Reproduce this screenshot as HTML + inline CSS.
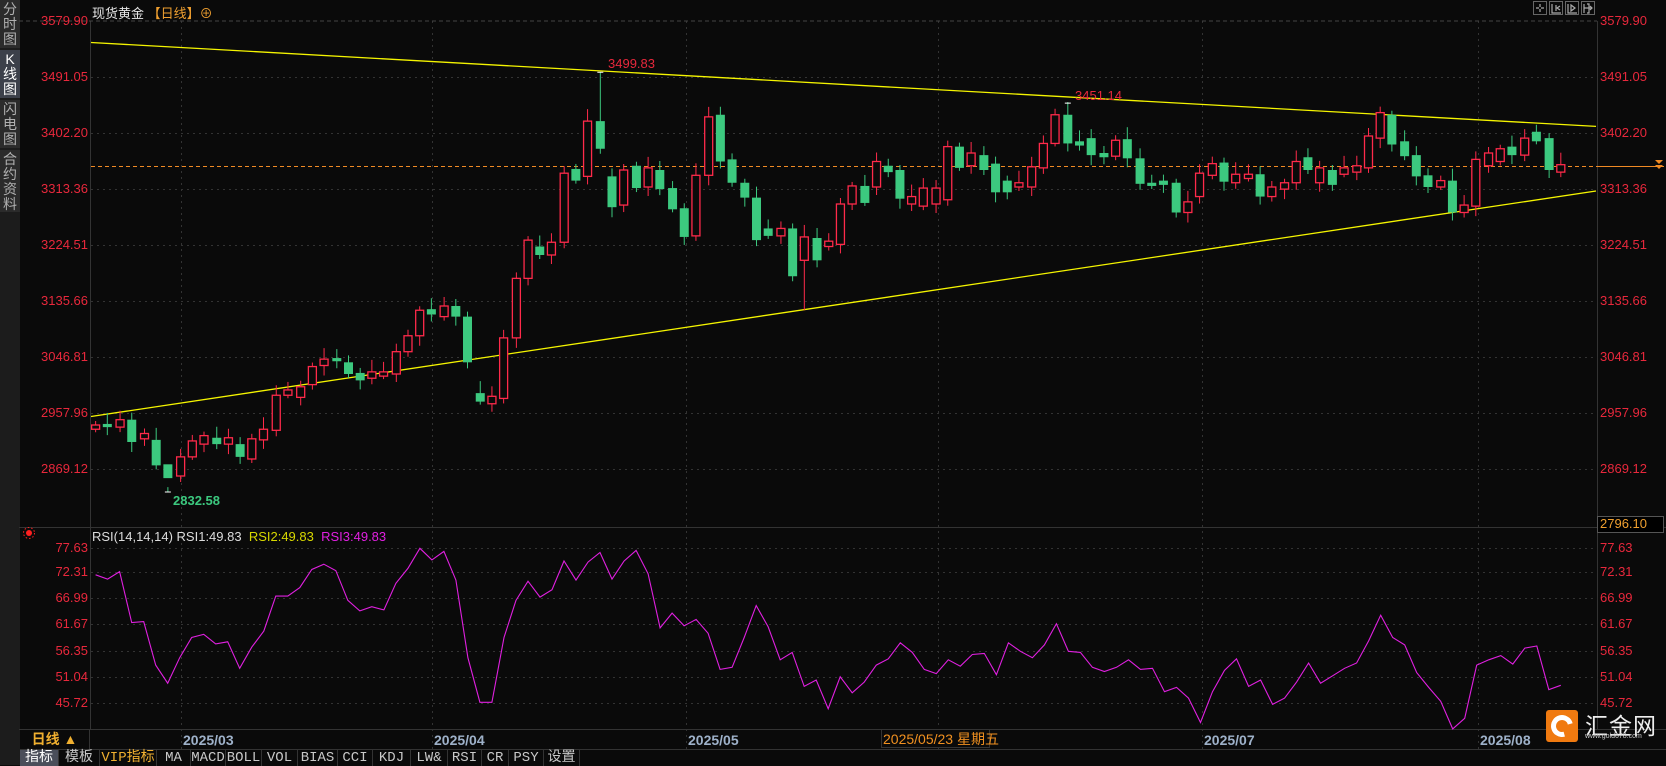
<!DOCTYPE html>
<html><head><meta charset="utf-8">
<style>
*{margin:0;padding:0;box-sizing:border-box}
body{width:1666px;height:765px;background:#0a0a0a;overflow:hidden;position:relative;font-family:"Liberation Sans","Noto Sans CJK SC",sans-serif}
.side{position:absolute;left:0;top:0;width:20px;height:765px;background:#1c1c1c}
.side div{position:absolute;left:0;width:20px;background:#2b2b2b;color:#b0b0b0;font-size:14px;line-height:15px;text-align:center;padding-top:2px}
.side div.act{background:#3c404a;color:#fff}
.lab{position:absolute;font-size:13px;color:#e8283c;line-height:14px}
.l{right:1578px}
.r{left:1600px}
.date{position:absolute;top:732px;font-size:14px;color:#9eb1c9;font-weight:bold}
.tabs{position:absolute;left:20px;top:749px;height:16px;width:1646px;border-top:1px solid #333;background:#0a0a0a}
.tab{position:absolute;top:0;height:16px;font-family:"Liberation Mono","Noto Sans CJK SC",monospace;font-size:14px;line-height:16px;color:#c8c8c8;text-align:center;border-right:1px solid #333}
</style></head><body>
<div class="side">
<div style="top:0;height:48px">分<br>时<br>图</div>
<div class="act" style="top:50px;height:48px">K<br>线<br>图</div>
<div style="top:100px;height:48px">闪<br>电<br>图</div>
<div style="top:150px;height:62px">合<br>约<br>资<br>料</div>
</div>
<div style="position:absolute;left:92px;top:3px;font-size:13px;color:#e6e6e6">现货黄金 <span style="color:#f0a030">【日线】</span><span style="color:#f0a030">⊕</span></div>

<svg style="position:absolute;left:0;top:0" width="1666" height="765">
<g stroke="#666" stroke-width="1" fill="none">
<rect x="1533.5" y="1.5" width="13" height="13"/><rect x="1549.5" y="1.5" width="13" height="13"/><rect x="1565.5" y="1.5" width="13" height="13"/><rect x="1581.5" y="1.5" width="13" height="13"/>
</g>
<g stroke="#aaa" stroke-width="1.2" fill="none">
<path d="M1540 4v3M1540 9v3M1536 8h3M1541 8h3M1552 4v9h9M1556 5v6M1560 6l-3 2 3 2M1568 4v9h9M1571 5v6l4-3z M1584 4v9M1584 8h8M1590 6l2 2-2 2M1587 4h2v9h-2"/>
</g>
<g id="grid" stroke="#333" stroke-dasharray="2,4" stroke-width="1"></g>
<line x1="90.5" y1="21" x2="90.5" y2="729" stroke="#333"/>
<line x1="1597.5" y1="21" x2="1597.5" y2="729" stroke="#333"/>
<line x1="19" y1="527.5" x2="1666" y2="527.5" stroke="#333"/>
<line x1="19" y1="729.5" x2="1666" y2="729.5" stroke="#333"/>
<line x1="19" y1="21" x2="1597" y2="21" stroke="#444" stroke-dasharray="4,3"/>
<line x1="91" y1="166.5" x2="1597" y2="166.5" stroke="#f08a24" stroke-dasharray="4,3"/>
<line x1="1597" y1="166.5" x2="1664" y2="166.5" stroke="#f08a24"/>
<path d="M1655 160h8l-4 4zM1655 165h8l-4 4z" fill="#f08a24"/>
<line x1="91" y1="42.5" x2="1596" y2="126.4" stroke="#f5f500" stroke-width="1.3"/>
<line x1="91" y1="416.5" x2="1596" y2="191" stroke="#f5f500" stroke-width="1.3"/>
<g id="candles"></g>
<polyline id="rsi" fill="none" stroke="#e020e0" stroke-width="1.1"/>
<circle cx="29" cy="533" r="3" fill="#ff2020"/>
<circle cx="29" cy="533" r="5.5" fill="none" stroke="#ff2020" stroke-dasharray="1.5,2"/>
<rect x="1597.5" y="516.5" width="66" height="16" fill="#000" stroke="#555"/>
</svg>

<div class="lab" style="left:608px;top:57px">3499.83</div>
<div class="lab" style="left:1075px;top:89px">3451.14</div>
<div class="lab" style="left:173px;top:494px;color:#3cc97f;font-weight:bold">2832.58</div>

<div class="lab l" style="top:14px">3579.90</div><div class="lab r" style="top:14px">3579.90</div>
<div class="lab l" style="top:70px">3491.05</div><div class="lab r" style="top:70px">3491.05</div>
<div class="lab l" style="top:126px">3402.20</div><div class="lab r" style="top:126px">3402.20</div>
<div class="lab l" style="top:182px">3313.36</div><div class="lab r" style="top:182px">3313.36</div>
<div class="lab l" style="top:238px">3224.51</div><div class="lab r" style="top:238px">3224.51</div>
<div class="lab l" style="top:294px">3135.66</div><div class="lab r" style="top:294px">3135.66</div>
<div class="lab l" style="top:350px">3046.81</div><div class="lab r" style="top:350px">3046.81</div>
<div class="lab l" style="top:406px">2957.96</div><div class="lab r" style="top:406px">2957.96</div>
<div class="lab l" style="top:462px">2869.12</div><div class="lab r" style="top:462px">2869.12</div>
<div class="lab r" style="top:517px;color:#f0a030">2796.10</div>

<div class="lab l" style="top:541px">77.63</div><div class="lab r" style="top:541px">77.63</div>
<div class="lab l" style="top:565px">72.31</div><div class="lab r" style="top:565px">72.31</div>
<div class="lab l" style="top:591px">66.99</div><div class="lab r" style="top:591px">66.99</div>
<div class="lab l" style="top:617px">61.67</div><div class="lab r" style="top:617px">61.67</div>
<div class="lab l" style="top:644px">56.35</div><div class="lab r" style="top:644px">56.35</div>
<div class="lab l" style="top:670px">51.04</div><div class="lab r" style="top:670px">51.04</div>
<div class="lab l" style="top:696px">45.72</div><div class="lab r" style="top:696px">45.72</div>

<div style="position:absolute;left:92px;top:529px;font-size:13px;color:#ddd;white-space:nowrap">RSI(14,14,14) RSI1:49.83 &nbsp;<span style="color:#d8d800">RSI2:49.83</span> &nbsp;<span style="color:#e020e0">RSI3:49.83</span></div>

<div style="position:absolute;left:20px;top:729px;width:70px;height:20px;border-right:1px solid #333;color:#f0b030;font-size:14px;font-weight:bold;text-align:center;line-height:20px">日线 ▲</div>
<div class="date" style="left:183px">2025/03</div>
<div class="date" style="left:434px">2025/04</div>
<div class="date" style="left:688px">2025/05</div>
<div class="date" style="left:1204px">2025/07</div>
<div class="date" style="left:1480px">2025/08</div>
<div style="position:absolute;left:881px;top:729px;width:109px;height:19px;border:1px solid #333;background:#0a0a0a;color:#f09020;font-size:14px;line-height:18px;padding-left:1px;white-space:nowrap">2025/05/23 星期五</div>

<div class="tabs">
<div class="tab" style="left:0;width:39px;background:#4a4e5a;color:#fff">指标</div>
<div class="tab" style="left:39px;width:41px">模板</div>
<div class="tab" style="left:80px;width:57px;color:#f0b030">VIP指标</div>
<div class="tab" style="left:137px;width:34px">MA</div>
<div class="tab" style="left:171px;width:35px">MACD</div>
<div class="tab" style="left:206px;width:36px">BOLL</div>
<div class="tab" style="left:242px;width:36px">VOL</div>
<div class="tab" style="left:278px;width:40px">BIAS</div>
<div class="tab" style="left:318px;width:35px">CCI</div>
<div class="tab" style="left:353px;width:38px">KDJ</div>
<div class="tab" style="left:391px;width:37px">LW&amp;</div>
<div class="tab" style="left:428px;width:34px">RSI</div>
<div class="tab" style="left:462px;width:27px">CR</div>
<div class="tab" style="left:489px;width:35px">PSY</div>
<div class="tab" style="left:524px;width:36px">设置</div>
</div>

<div style="position:absolute;left:1546px;top:710px;width:32px;height:32px;background:#f07a10;border-radius:3px"></div>
<div style="position:absolute;left:1551px;top:715px;width:22px;height:22px;border-radius:50%;border:5px solid #fff;border-right-color:transparent;transform:rotate(30deg)"></div>
<div style="position:absolute;left:1585px;top:707px;font-size:23px;color:#eee;letter-spacing:1px">汇金网</div>
<div style="position:absolute;left:1585px;top:733px;font-size:7px;color:#ccc">www.gold678.com</div>

<script>
var S=1.0625;
var D=[[90,'r',400,404],[101,'g',399,402],[113,'r',395,402],[124,'g',395,416],[136,'r',408,413],[147,'g',414,438],[158,'g',437,450,463],[170,'r',430,448],[181,'r',415,430],[192,'r',410,418],[204,'g',412,418],[215,'r',412,418],[226,'g',418,430],[237,'r',413,432],[248,'r',404,414],[260,'r',372,405],[271,'r',367,372],[283,'r',364,374],[294,'r',345,362],[305,'r',338,344],[317,'g',337,340],[328,'g',341,352],[339,'g',351,358],[350,'r',350,356],[361,'r',350,354],[373,'r',331,352],[384,'r',316,331],[395,'r',292,316],[406,'g',291,296],[418,'r',288,298],[429,'g',288,298],[440,'g',298,341],[452,'g',370,378],[463,'r',373,380],[474,'r',318,375],[486,'r',262,318],[497,'r',226,262],[508,'g',232,240],[519,'r',228,240],[531,'r',163,228],[542,'g',159,170],[553,'r',114,166],[565,'g',114,140,68],[576,'g',166,195],[587,'r',160,193],[599,'g',156,177],[610,'r',158,176],[621,'g',160,178],[633,'g',177,197],[644,'g',196,223],[655,'r',165,222],[667,'r',110,165],[678,'g',108,152],[689,'g',150,172],[701,'g',172,186],[712,'g',186,226],[723,'g',215,222],[735,'r',215,222],[746,'g',215,260],[757,'r',223,245,292],[769,'g',224,245],[780,'r',227,232],[791,'r',192,230],[802,'r',175,192],[814,'g',175,191],[825,'r',152,176],[836,'g',156,162],[847,'g',160,187],[858,'r',185,192],[869,'r',177,194],[881,'r',177,192],[892,'r',138,188],[903,'g',138,158],[914,'r',144,156],[926,'g',146,160],[937,'g',154,181],[948,'g',170,181],[959,'r',172,176],[971,'r',157,176],[982,'r',135,158],[993,'r',108,135],[1005,'g',108,135,96],[1016,'g',133,137],[1027,'g',130,146],[1039,'g',144,148],[1050,'r',132,147],[1061,'g',131,149],[1073,'g',149,173],[1084,'g',172,175],[1095,'g',170,174],[1107,'g',172,200],[1118,'r',190,200],[1129,'r',163,185],[1141,'r',154,165],[1152,'g',153,171],[1163,'r',164,172],[1175,'r',164,168],[1186,'g',164,185],[1197,'r',176,185],[1209,'r',172,178],[1220,'r',152,172],[1231,'g',148,160],[1242,'r',158,172],[1254,'g',160,174],[1265,'r',158,164],[1277,'r',156,162],[1288,'r',128,158],[1299,'r',106,130],[1310,'g',108,136],[1322,'g',133,147],[1333,'g',146,166],[1344,'g',165,176],[1356,'r',170,176],[1367,'g',170,200],[1378,'r',193,200],[1389,'r',150,194],[1401,'r',144,156],[1412,'r',140,152],[1423,'g',138,146],[1435,'r',130,146],[1446,'g',124,133],[1458,'g',130,160],[1469,'r',155,162]];
var h='';
D.forEach(function(d,i){
 var x=d[0]*S,t=d[2]*S,b=d[3]*S,hi=t-4-((i*7)%9),lo=b+3+((i*5)%8);
 if(d[4]){ if(d[4]<t)hi=d[4]*S; else lo=d[4]*S; }
 var c=d[1]=='r'?'#ff2a4a':'#3cc97f';
 if(b-t<1.5)b=t+1.5;
 h+='<line x1="'+x+'" x2="'+x+'" y1="'+hi+'" y2="'+lo+'" stroke="'+c+'"/>';
 if(d[1]=='r')h+='<rect x="'+(x-4)+'" y="'+t+'" width="8" height="'+(b-t)+'" fill="#0a0a0a" stroke="'+c+'" stroke-width="1.3"/>';
 else h+='<rect x="'+(x-4.5)+'" y="'+t+'" width="9" height="'+(b-t)+'" fill="'+c+'"/>';
});
h+='<path d="M'+(565*S-3)+' '+(68*S)+'h6M'+(1005*S-3)+' '+(97*S)+'h6M'+(158*S-3)+' '+(463*S)+'h6" stroke="#fff"/>';
document.getElementById('candles').innerHTML=h;
var R=[541,545,538,586,585,626,643,619,600,597,606,604,629,609,594,561,561,553,536,531,537,565,575,571,574,549,535,516,527,519,546,619,661,661,600,565,547,562,555,528,546,529,520,545,528,518,540,591,577,589,583,596,630,628,600,570,590,621,614,646,640,667,637,652,642,626,620,605,614,630,634,621,627,616,615,635,605,613,619,607,587,613,614,628,632,628,621,630,629,651,647,657,680,651,631,620,646,640,663,657,642,624,643,636,629,624,603,579,600,607,633,647,660,686,676,626,621,617,625,610,608,649,645];
var n=R.length,p=[];
R.forEach(function(y,i){p.push(((90+i*(1469-90)/(n-1))*S).toFixed(1)+','+(y*S).toFixed(1));});
document.getElementById('rsi').setAttribute('points',p.join(' '));
var g='';
[77,133,189,245,301,357,413,469,548,572,598,624,651,677,703].forEach(function(y){g+='<line x1="91" x2="1597" y1="'+(y+.5)+'" y2="'+(y+.5)+'"/>';});
[181,432,686,938,1202,1478].forEach(function(x){g+='<line x1="'+(x+.5)+'" x2="'+(x+.5)+'" y1="21" y2="749"/>';});
document.getElementById('grid').innerHTML=g;
</script>
</body></html>
